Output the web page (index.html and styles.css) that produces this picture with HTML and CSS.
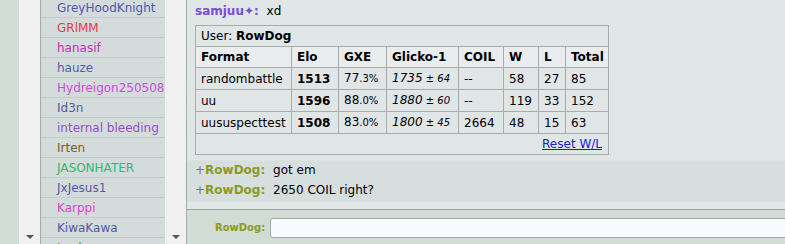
FILE: index.html
```html
<!DOCTYPE html>
<html lang="en">
<head>
    <meta charset="UTF-8">
    <title>Lobby</title>
    <link rel="stylesheet" href="styles.css">
</head>
<body>
    <div class="app">
        <div class="bg-strip"></div>
        <div class="scroll-strip"><span class="arrow"></span></div>

        <ul class="userlist">
            <li class="u-blue">GreyHoodKnight</li>
            <li class="u-red">GRlMM</li>
            <li class="u-magenta">hanasif</li>
            <li class="u-blue2">hauze</li>
            <li class="u-pink">Hydreigon250508</li>
            <li class="u-blue">Id3n</li>
            <li class="u-purple">internal bleeding</li>
            <li class="u-brown">Irten</li>
            <li class="u-green">JASONHATER</li>
            <li class="u-blue">JxJesus1</li>
            <li class="u-hotpink">Karppi</li>
            <li class="u-blue">KiwaKawa</li>
            <li class="u-darkgreen">Leelo</li>
        </ul>

        <div class="scroll-strip"><span class="arrow"></span></div>

        <div class="room">
            <div class="chat-log">
                <div class="msg"><strong class="name-purple">samjuu&#10022;:</strong> xd</div>

                <div class="ladder">
                    <table>
                        <colgroup>
                            <col class="c-format">
                            <col class="c-elo">
                            <col class="c-gxe">
                            <col class="c-glicko">
                            <col class="c-coil">
                            <col class="c-w">
                            <col class="c-l">
                            <col class="c-total">
                        </colgroup>
                        <tr>
                            <td colspan="8">User: <strong>RowDog</strong></td>
                        </tr>
                        <tr class="head">
                            <th>Format</th>
                            <th>Elo</th>
                            <th>GXE</th>
                            <th>Glicko-1</th>
                            <th>COIL</th>
                            <th>W</th>
                            <th>L</th>
                            <th>Total</th>
                        </tr>
                        <tr>
                            <td>randombattle</td>
                            <td><strong>1513</strong></td>
                            <td>77<small>.3%</small></td>
                            <td><em>1735<small> &plusmn; 64</small></em></td>
                            <td>--</td>
                            <td>58</td>
                            <td>27</td>
                            <td>85</td>
                        </tr>
                        <tr>
                            <td>uu</td>
                            <td><strong>1596</strong></td>
                            <td>88<small>.0%</small></td>
                            <td><em>1880<small> &plusmn; 60</small></em></td>
                            <td>--</td>
                            <td>119</td>
                            <td>33</td>
                            <td>152</td>
                        </tr>
                        <tr>
                            <td>uususpecttest</td>
                            <td><strong>1508</strong></td>
                            <td>83<small>.0%</small></td>
                            <td><em>1800<small> &plusmn; 45</small></em></td>
                            <td>2664</td>
                            <td>48</td>
                            <td>15</td>
                            <td>63</td>
                        </tr>
                        <tr>
                            <td colspan="8" class="reset"><a href="#">Reset W/L</a></td>
                        </tr>
                    </table>
                </div>

                <div class="msg"><span class="rank">+</span><strong class="name-olive">RowDog:</strong> got em</div>
                <div class="msg"><span class="rank">+</span><strong class="name-olive">RowDog:</strong> 2650 COIL right?</div>
            </div>

            <div class="chat-add">
                <label class="name-olive">RowDog:</label>
                <input type="text" class="textbox">
            </div>
        </div>
    </div>
</body>
</html>
```

FILE: styles.css
```css
body {
    margin: 0;
    font-family: "DejaVu Sans", Verdana, sans-serif;
    font-size: 12px;
    color: #000;
    background-color: #d2dcd7;
    overflow: hidden;
}
.app {
    display: flex;
    height: 244px;
}
.bg-strip {
    width: 19px;
    flex: none;
}
.scroll-strip {
    width: 21px;
    flex: none;
    background-color: #f0f0f0;
    display: flex;
    align-items: flex-end;
    justify-content: center;
}
.arrow {
    width: 0;
    height: 0;
    border-left: 4px solid transparent;
    border-right: 4px solid transparent;
    border-top: 4px solid #555;
    margin-bottom: 5px;
}
.userlist {
    list-style: none;
    margin: 0;
    padding: 0;
    width: 124px;
    flex: none;
    border-left: 1px solid #a8a8a8;
    background-color: #d4dcdb;
    overflow: hidden;
}
.userlist li {
    height: 19px;
    line-height: 20px;
    padding-left: 16px;
    border-bottom: 1px solid #c4cccb;
    white-space: nowrap;
}
.userlist li:first-child {
    margin-top: -2px;
}
.u-blue { color: #5656a6; }
.u-blue2 { color: #5a5ab0; }
.u-red { color: #e23a4e; }
.u-magenta { color: #c02fb4; }
.u-pink { color: #c64fd6; }
.u-purple { color: #9150c8; }
.u-brown { color: #7d5a2e; }
.u-green { color: #2eb878; }
.u-hotpink { color: #e040d0; }
.u-darkgreen { color: #3b9a2a; }

.room {
    flex: 1;
    display: flex;
    flex-direction: column;
    border-left: 1px solid #a8a8a8;
    overflow: hidden;
}
.chat-log {
    flex: 1;
    padding: 1px 8px 0;
    background: linear-gradient(#e1e6e6, #e0e5e5 160px, #d7dede 161px, #d7dede 202px, #e1e6e6 202px);
    border-bottom: 1px solid #a0a0a0;
}
.msg {
    line-height: 20px;
    white-space: nowrap;
}
.msg strong {
    margin-right: 4px;
}
.name-purple {
    color: #7a4fd4;
}
.name-olive {
    color: #8b9a1f;
    font-weight: bold;
}
.rank {
    color: #777;
}
.ladder {
    margin: 4px 0 5px;
}
.ladder table {
    border-collapse: collapse;
    table-layout: fixed;
    width: 413px;
}
.ladder td, .ladder th {
    border: 1px solid #aaa;
    padding: 3px 5px;
    line-height: 14px;
    text-align: left;
    white-space: nowrap;
}
.ladder .head th {
    background-color: #e9eded;
}
.ladder small {
    font-size: 10px;
}
.c-format { width: 96px; }
.c-elo { width: 47px; }
.c-gxe { width: 48px; }
.c-glicko { width: 72px; }
.c-coil { width: 45px; }
.c-w { width: 35px; }
.c-l { width: 27px; }
.c-total { width: 43px; }
.ladder .reset {
    text-align: right;
    padding-right: 6px;
}
.reset a {
    color: #1a1ad6;
}
.chat-add {
    height: 34px;
    display: flex;
    align-items: flex-start;
    padding: 8px 0 0 28px;
    box-sizing: border-box;
    background-color: #d2dcd7;
}
.chat-add label {
    font-size: 10px;
    line-height: 20px;
    margin-right: 5px;
}
.textbox {
    flex: 1;
    height: 20px;
    box-sizing: border-box;
    border: 1px solid #a8a8a8;
    border-radius: 3px 0 0 3px;
    background-color: #f7faff;
    margin: 0 -6px 0 0;
    padding: 0 4px;
}
```
